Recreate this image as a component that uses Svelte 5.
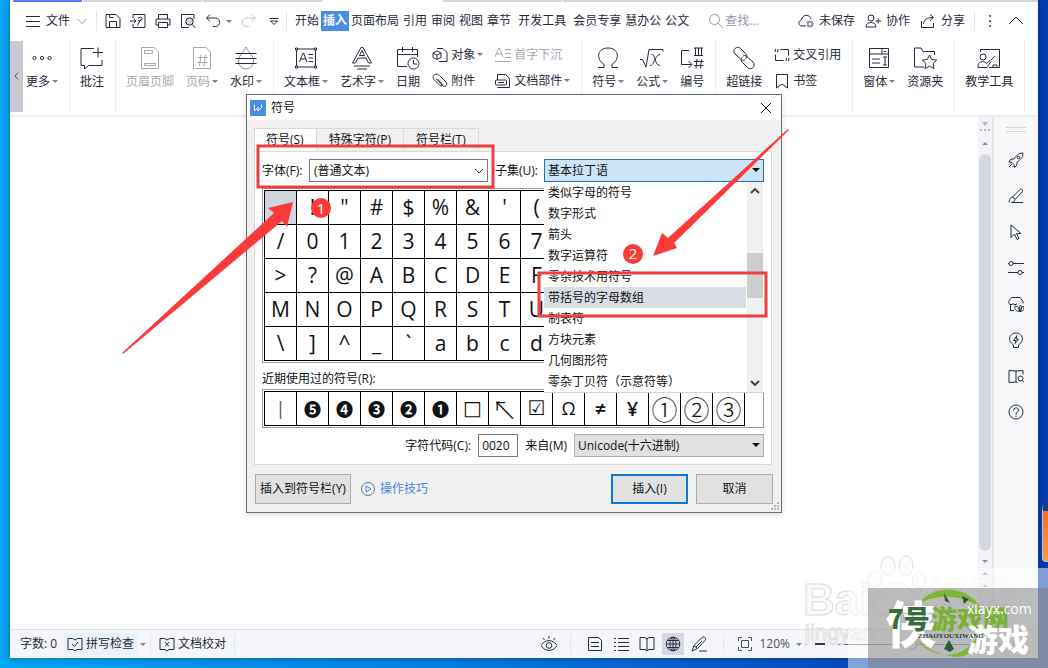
<script lang="ts">
  const icons: Record<string, string> = {
    menu: '<path d="M1 3.500h14M1 8.500h14M1 13.500h14"/>',
    chevron: '<path d="M3.500 6 8 10.500 12.500 6"/>',
    save: '<path d="M1 14.500V1.500h10l4 4v9zM4.500 14.500v-6h7v6M4.500 1.500v3h4"/>',
    export: '<path d="M3 5V1.500h12v13H3V11M0 8h6M4 6l2 2-2 2M7.500 12.500l3-6M8 5.500c1.500-2 4.500-1.500 4 .5-.4 2-3 2.500-4 1.500"/>',
    print: '<path d="M3.500 6V1.500h9V6M3.500 12H1V6h14v6h-2.500M3.500 9.500h9v5h-9z"/>',
    preview: '<path d="M14 6V1.500H1.500v13H9"/><circle cx="9.500" cy="8.500" r="3.700" fill="#d3d5da"/><path d="m12.300 11.500 3 3.500"/>',
    undo: '<path d="M5 1.500 1.500 5 5 8.500M2 5h8.500c5.500 0 5.500 8.500 0 8.500H8"/>',
    redo: '<path d="m11 1.500 3.500 3.500L11 8.500M14 5H5.500C0 5 0 13.500 5.500 13.500H8"/>',
    drop: '<path d="M3.500 5.500h9M4.500 8h7L8 11.500z"/>',
    search: '<circle cx="6.500" cy="6.500" r="5"/><path d="m10.300 10.300 4.700 4.700"/>',
    cloud: '<path d="M8 13H4C.5 13-.5 8 3.500 7c.5-6 8.500-6 9.500-1"/><circle cx="12" cy="11" r="3" fill="#98a0b5" stroke="#7d869e"/><path stroke="#fff" d="m11 10 2 2m0-2-2 2"/>',
    people: '<circle cx="6" cy="5" r="3"/><path d="M1 14c0-6 10-6 10 0zM10.500 8H16M13.200 5.500v5"/>',
    share: '<path d="M1.500 8v6.500h12V10M3.500 11C4 6.500 7 4.500 13 4.500M10 1.500l3.500 3-3.500 3"/>',
    more: '<path fill="#6b7080" stroke="none" d="M7 2h2v2H7zM7 7h2v2H7zM7 12h2v2H7z"/>',
    up: '<path d="m1 11 7-7 7 7"/>',
    object: '<path d="M5 1.500h6l4 4v9H7"/><path d="m5 4 4 2v4.500l-4 2-4-2V6zM1 6l4 2.200L9 6M5 8.200v4.300"/>',
    clip: '<path d="m4 5.500 6.500 7c2.500 2.500 6-1 3.500-3.500L7.500 2.500C4-1-1 3 2 6.500l6 6c1.500 1.200 3-.3 2-1.700L5.500 6"/>',
    dropcap: '<path d="M0 10 3.700 1h.6L8 10M1.500 7h5M10 2.500h6M10 6.500h6M10 10.500h6M0 14.500h16"/>',
    parts: '<path d="M2.500 7V1.500h8l4 4v9h-12"/><rect x=".5" y="7" width="11" height="5" rx="1"/><path d="M3 9.500h6"/>',
    cross: '<path d="M6.500 2.500h8v6M1.500 7.500v6h8M1 5l.5-3M3.500 5 4 2M12 14l.5-3M14.500 14l.5-3"/>',
    bookmark: '<path d="M2.500 1.500h11v13.500L8 11l-5.500 4z"/>',
    dots: '<circle cx="4.500" cy="12" r="1.600"/><circle cx="12" cy="12" r="1.600"/><circle cx="19.500" cy="12" r="1.600"/>',
    comment: '<path d="M14 2.500H1v17h3.500V23l4-3.500H22V14M13 6.500h10M18 1.500v10"/>',
    header: '<path d="M3.500 1.500H16L20.500 6v16.500h-17zM6.500 4.500h8v3h-8zM6.500 17.500h11v2h-11z"/>',
    page: '<path d="M3.500 1.500H16L20.500 6v16.500h-17zM8 11.500h9.500M7.500 16.500H17M11 8.500 9.500 20M15.500 8.500 14 20"/>',
    water: '<path opacity=".5" d="M12 1C9 7 4.500 10 4.500 15.500a7.500 7.500 0 0 0 15 0C19.500 10 15 7 12 1z"/><path d="M1.500 7.500h21M1.500 12.500h21M1.500 17.500h21"/>',
    textbox: '<path d="M2.500 3h19v18h-19zM5.500 16 9 7h.5l3.500 9M7 13h5M14.500 8.500h4.500M14.500 12h4.500M14.500 15.500h4.500"/><path fill="#fff" d="M1.500 2h2v2h-2zM20.500 2h2v2h-2zM1.500 20h2v2h-2zM20.500 20h2v2h-2z"/>',
    art: '<path d="M2.500 17 11 1.500h2L21.500 17h-3L16 12H8l-2.500 5zM9.500 9.500h5L12 4.500zM4 20h16M7 23h10"/>',
    date: '<path d="M11 20.500H1.500v-17h20V11M1.500 8.500h20M6.500 1v5M16.500 1v5"/><circle cx="17.500" cy="17.500" r="5.500"/><path d="M17.500 14v4H21"/>',
    omega: '<path d="M2 21.500h6v-3C-1 12 2 2 12 2s13 10 4 16.500v3h6"/>',
    formula: '<path d="M0 13.500h2.500L6 21 9 3.500h14v2M10 19.500c4 1 5-11 10-11M11.500 8.500c4-1 3 11 8.500 11"/>',
    number: '<path d="M9 4.500H1.500v14h10M8.500 15l3.500 3.500L8.500 22M14 2h9M14 9.500h9M15.500 2v7.500M18.500 2v7.500M21.500 2v7.500M14 15.500h9.500M14 19.500h9.500M17 13l-1 9.500M21.500 13l-1 9.500"/>',
    link: '<path d="M13 14c-2 1-3.500 0-5-1.500L3 8C-.5 4 5-1 8.500 2.500l5 5c2 2 1.500 4 0 5.500M11 10c2-1 3.500 0 5 1.500l5 4.500c3.500 4-2 9-5.500 5.500l-5-5c-2-2-1.500-4 0-5.500"/>',
    form: '<path d="M2.500 2.500h19v19h-19zM2.500 8h19M15 2.500V8M5 13h8M5 17h8M16 11h4M16 19h4M18 11v8M17 5l1 1 1-1"/>',
    folder: '<path d="M11 21H1.500V2H8l2 3.500h11.500V9"/><path d="m16.500 9 2.200 4.500 5 .6-3.600 3.500 1 5-4.600-2.500L12 22.600l1-5-3.700-3.500 5-.6z"/>',
    teach: '<path d="M3.500 6V3.500h19v18H12M14 14l4-4M16 21.500v-2.500h4v2.500"/><circle cx="6" cy="11" r="3"/><path d="M1 21.500c-1-7 7-7 8-4l4-3 1 1-4 6z"/>',
    rocket: '<path d="M15 1c-5 0-7 3-9 6H3L1 10l3 .5 2 2 .5 3L9 13v-3c3-2 6-4 6-9zM1 15l3-3M4.500 15l1-1M1 12.500l1-1"/><circle cx="10.500" cy="5.500" r="1.300"/>',
    brush: '<path d="M1 14.500c1-5 2-6 5-4.500 2 2 0 4.500-2.500 4.500H15M4.500 9 12 1.500c2-1.500 3.500 1 2 2.500L7 11.500"/>',
    cursor: '<path d="M3 1v12.500l3.500-3.500 2.500 5.500 2-1-2.500-5H13z"/>',
    sliders: '<path d="M0 3.500h1M5 3.500h11M0 12.500h10M14 12.500h2"/><circle cx="3" cy="3.500" r="2"/><circle cx="12" cy="12.500" r="2"/>',
    tool: '<path d="M6 14.500H2.500V9M4 1.500h8l3 4v2M1 7.500c-1-2 1-5 3-6M1 7.500c1 1.500 3 1.500 4 0 1 1.500 3 1.500 4 0M11.500 15.500C6.500 15 6.500 12 7 10c3 0 4.500 2 4.500 5.500zm0 0c-1-3 0-5 1-6.500 1.500 2 1 4 0 6.500zm1 0c4-1 3.500-3 3-5-2 0-3 2-3 5z"/>',
    bulb: '<path d="M5.500 15.500V13C-1 9 1 1 8 1s9 8 2.500 12v2.500zM9 3.500 5.500 8.500H8L7 11.500l3.500-4.500H8z"/>',
    reader: '<path d="M9.500 14.500 8 14l-7 .5v-12L8 3l7-.5v4M8 3v11"/><circle cx="12.500" cy="10.500" r="2.500"/><path d="m14.300 12.300 1.700 2"/>',
    help: '<circle cx="8" cy="8" r="7"/><path d="M5.500 6.500C5.500 3 10.500 3 10.500 6c0 2-2.500 2-2.500 4.500M8 11.500v1.500"/>',
    spell: '<path d="M1 2.500h4.500L8 4l2.500-1.500H15v11h-5L8 15l-2-1.500H1zM5 8l2.500 2.500L11 6"/>',
    proof: '<path d="M1 2.500h4.500L8 4l2.500-1.500H15v11h-5L8 15l-2-1.500H1zM6 6l4 4.500M10 6l-4 4.500"/>',
    eye: '<path d="M0 9.500c4-6.500 12-6.500 16 0-4 6.500-12 6.500-16 0zM8 0v2.500M2 2l1.500 2M14 2l-1.500 2"/><circle cx="8" cy="9.500" r="2.800"/>',
    doc: '<path d="M1.500 1.500h10l3 3v10h-13zM4 6.500h8M4 10.500h8"/>',
    list: '<path d="M5 2.500h11M5 6.500h11M5 10.500h11M5 14.500h11M1 2.500h2M1 6.500h2M1 10.500h2M1 14.500h2"/>',
    book: '<path d="M1 1.500h5L8 3l2-1.500h5v12h-5L8 15l-2-1.500H1zM8 3v12"/>',
    globe: '<circle cx="8" cy="8" r="6.800"/><ellipse cx="8" cy="8" rx="3" ry="6.800"/><path d="M1.500 8h13M2.500 4.500h11M2.500 11.500h11M8 1v14"/>',
    pen: '<path d="m1 15 2-5.500L11 1.500c2-1.500 5 1 3 3L6.500 12.500 1 15zM3 9.500l3.500 3M5 11l6-6M8 15h8"/>',
    fit: '<path d="M1.500 5V1.500H5M11 1.500h3.500V5M14.500 11v3.500H11M5 14.500H1.500V11M4.500 4.500h7v7h-7z"/>',
    play: '<circle cx="8" cy="8" r="6.500"/><path stroke="#4a86d8" d="m6 5 5 3-5 3z"/>',
    close: '<path d="m3 3 10 10M13 3 3 13"/>',
  };

  interface Tool {
    icon: string;
    label: string;
    caret?: boolean;
    muted?: boolean;
  }

  const quickTools = ["save", "export", "print", "preview"];

  const menuTabs = [
    { label: "开始" },
    { label: "插入", active: true },
    { label: "页面布局" },
    { label: "引用" },
    { label: "审阅" },
    { label: "视图" },
    { label: "章节" },
    { label: "开发工具", spaced: true },
    { label: "会员专享", spaced: true },
    { label: "慧办公" },
    { label: "公文" },
  ];

  // An inner array is a column of small buttons
  const ribbon: (Tool | Tool[])[][] = [
    [{ icon: "dots", label: "更多", caret: true }],
    [{ icon: "comment", label: "批注" }],
    [
      { icon: "header", label: "页眉页脚", muted: true },
      { icon: "page", label: "页码", caret: true, muted: true },
      { icon: "water", label: "水印", caret: true },
    ],
    [
      { icon: "textbox", label: "文本框", caret: true },
      { icon: "art", label: "艺术字", caret: true },
      { icon: "date", label: "日期" },
      [
        { icon: "object", label: "对象", caret: true },
        { icon: "clip", label: "附件" },
      ],
      [
        { icon: "dropcap", label: "首字下沉", muted: true },
        { icon: "parts", label: "文档部件", caret: true },
      ],
    ],
    [
      { icon: "omega", label: "符号", caret: true },
      { icon: "formula", label: "公式", caret: true },
      { icon: "number", label: "编号" },
    ],
    [
      { icon: "link", label: "超链接" },
      [
        { icon: "cross", label: "交叉引用" },
        { icon: "bookmark", label: "书签" },
      ],
    ],
    [
      { icon: "form", label: "窗体", caret: true },
      { icon: "folder", label: "资源夹" },
    ],
    [{ icon: "teach", label: "教学工具" }],
  ];

  const sideTools = ["rocket", "brush", "cursor", "sliders", "tool", "bulb", "reader", "help"];
  const viewModes = ["doc", "list", "book", "globe", "pen"];

  const subsets = [
    "类似字母的符号",
    "数字形式",
    "箭头",
    "数字运算符",
    "零杂技术用符号",
    "带括号的字母数组",
    "制表符",
    "方块元素",
    "几何图形符",
    "零杂丁贝符（示意符等）",
  ];

  const symbols = Array.from({ length: 75 }, (_, i) => String.fromCharCode(32 + i));

  const recent = [
    { char: "|", kind: "thin" },
    { char: "❺", kind: "round" },
    { char: "❹", kind: "round" },
    { char: "❸", kind: "round" },
    { char: "❷", kind: "round" },
    { char: "❶", kind: "round" },
    { char: "□", kind: "shape" },
    { char: "↖", kind: "ring" },
    { char: "☑", kind: "shape" },
    { char: "Ω", kind: "" },
    { char: "≠", kind: "strong" },
    { char: "¥", kind: "strong" },
    { char: "①", kind: "ring" },
    { char: "②", kind: "ring" },
    { char: "③", kind: "ring" },
  ];

  let selected = $state(0);
  let highlighted = $state(5);
  let code = $state("0020");
  let zoom = $state(43);

  function pick(index: number) {
    selected = index;
    code = symbols[index].charCodeAt(0).toString(16).toUpperCase().padStart(4, "0");
  }
</script>

{#snippet icon(name: string, big = false)}
  <svg class="icon" class:big viewBox={big ? "0 0 24 24" : "0 0 16 16"} aria-hidden="true">{@html icons[name]}</svg>
{/snippet}

<div class="desktop">
  <div class="app">
    <div class="doc-tabs"><i class="home"></i><i></i><i></i><i class="open"></i><i></i><i class="rest"></i></div>

    <header class="menubar">
      <button class="file">{@render icon("menu")}文件</button>
      <button class="file-more" aria-label="文件">{@render icon("chevron")}</button>
      <div class="quick">
        {#each quickTools as name}
          <button aria-label={name}>{@render icon(name)}</button>
        {/each}
        <button class="undo" aria-label="undo">{@render icon("undo")}<i class="caret"></i></button>
        <button class="faded" aria-label="redo">{@render icon("redo")}</button>
        <button aria-label="drop">{@render icon("drop")}</button>
      </div>
      <nav>
        {#each menuTabs as tab}
          <button class="menu-tab" class:active={tab.active} class:spaced={tab.spaced}>{tab.label}</button>
        {/each}
      </nav>
      <button class="find">{@render icon("search")}查找...</button>
      <div class="account">
        <button>{@render icon("cloud")}未保存</button>
        <button>{@render icon("people")}协作</button>
        <button>{@render icon("share")}分享</button>
        <span class="rule"></span>
        <button aria-label="more">{@render icon("more")}</button>
        <button aria-label="up">{@render icon("up")}</button>
      </div>
    </header>

    <div class="ribbon">
      <button class="back" aria-label="back"><svg viewBox="0 0 6 10"><path d="M5 1 1 5l4 4" /></svg></button>
      {#each ribbon as group}
        <div class="group">
          {#each group as item}
            {#if Array.isArray(item)}
              <div class="stack">
                {#each item as tool}
                  <button class="small" class:muted={tool.muted}>
                    {@render icon(tool.icon)}<span class:with-caret={tool.caret}>{tool.label}</span>
                  </button>
                {/each}
              </div>
            {:else}
              <button class="large" class:muted={item.muted}>
                {@render icon(item.icon, true)}<span class:with-caret={item.caret}>{item.label}</span>
              </button>
            {/if}
          {/each}
        </div>
      {/each}
    </div>

    <div class="work">
      <main class="paper"></main>
      <div class="scroller">
        <svg class="ruler" viewBox="0 0 12 12"><path d="M3 1h6L6 5zM1 8h2v2H1zM5 8h2v2H5zM9 8h2v2H9z" /></svg>
        <i class="arrow up"></i>
        <div class="thumb"></div>
        <i class="arrow down"></i>
        <i class="arrow up"></i>
        <i class="arrow up"></i>
      </div>
      <aside>
        <div class="handle"></div>
        {#each sideTools as name}
          <button aria-label={name}>{@render icon(name)}</button>
        {/each}
      </aside>
    </div>

    <footer>
      <span class="count">字数: 0</span>
      <button class="check">{@render icon("spell")}拼写检查</button>
      <i class="caret"></i>
      <span class="rule"></span>
      <button class="proof">{@render icon("proof")}文档校对</button>
      <span class="rule"></span>
      <div class="views">
        <button aria-label="eye">{@render icon("eye")}</button>
        <span class="rule"></span>
        <div class="modes">
          {#each viewModes as name}
            <button class:current={name === "globe"} aria-label={name}>{@render icon(name)}</button>
          {/each}
        </div>
        <span class="rule"></span>
        <button class="fit">{@render icon("fit")}120%<i class="caret"></i></button>
        <button class="minus" aria-label="-"></button>
        <input type="range" aria-label="120%" bind:value={zoom} />
      </div>
    </footer>
  </div>

  <div class="shortcut"></div>

  <section class="dialog" aria-labelledby="dialog-title">
    <div class="title">
      <svg class="logo" viewBox="0 0 16 16"><rect width="16" height="16" rx="1" /><path d="M4.500 4.500v6.500L8 7.500V11l3.500-3.500v-3" /></svg>
      <span id="dialog-title">符号</span>
      <button class="close" aria-label="close">{@render icon("close")}</button>
    </div>
    <div class="tabs">
      <button class="active">符号(S)</button>
      <button>特殊字符(P)</button>
      <button>符号栏(T)</button>
    </div>
    <div class="panel">
      <div class="fields">
        <label for="font">字体(F):</label>
        <div class="combo font">
          <select id="font"><option>(普通文本)</option></select>
          <svg viewBox="0 0 10 6"><path d="m1 1 4 4 4-4" /></svg>
        </div>
        <label for="subset">子集(U):</label>
        <div class="combo subset">
          <select id="subset"><option>基本拉丁语</option></select>
          <i></i>
          <div class="popup">
            <ul role="listbox" aria-label="子集">
              {#each subsets as subset, i}
                <li
                  role="option"
                  aria-selected={i === highlighted}
                  class:hover={i === highlighted}
                  onmouseenter={() => (highlighted = i)}
                >
                  {subset}
                </li>
              {/each}
            </ul>
            <div class="popup-bar">
              <svg viewBox="0 0 10 6"><path d="m1 5 4-4 4 4" /></svg>
              <div></div>
              <svg viewBox="0 0 10 6"><path d="m1 1 4 4 4-4" /></svg>
            </div>
          </div>
        </div>
      </div>
      <div class="frame">
        <div class="cells">
          {#each symbols as char, i}
            <button class:selected={i === selected} onclick={() => pick(i)} aria-label={char}>{char}</button>
          {/each}
        </div>
      </div>
      <div class="recent-label">近期使用过的符号(R):</div>
      <div class="frame">
        <div class="cells recent">
          {#each recent as item}
            <button class={item.kind}>{item.char}</button>
          {/each}
        </div>
      </div>
      <div class="code-row">
        <label for="code">字符代码(C):</label>
        <input id="code" bind:value={code} />
        <label for="source">来自(M)</label>
        <div class="combo source">
          <select id="source"><option>Unicode(十六进制)</option></select>
          <i></i>
        </div>
      </div>
    </div>
    <div class="actions">
      <button class="to-bar">插入到符号栏(Y)</button>
      <a href="#tips">{@render icon("play")}操作技巧</a>
      <button class="primary">插入(I)</button>
      <button>取消</button>
    </div>
    <svg class="grip" viewBox="0 0 8 8"><path d="M6 0h2v2H6zM3 3h2v2H3zM6 3h2v2H6zM0 6h2v2H0zM3 6h2v2H3zM6 6h2v2H6z" /></svg>
  </section>

  <svg class="marks" viewBox="0 0 1048 668">
    <rect x="258" y="146" width="235" height="41" />
    <rect x="539" y="273" width="227" height="43" />
    <path d="M293 202 287 227 282 221 123 354 122 353 274 213 268 208z" />
    <path d="M653 256 662 233 668 238 788 129 789 130 674 243 677 248z" />
    <circle cx="321" cy="208" r="10" />
    <circle cx="633" cy="254" r="10" />
    <text x="321" y="214">1</text>
    <text x="633" y="259">2</text>
  </svg>

  <svg class="brand" viewBox="0 0 248 118">
    <g class="baidu">
      <text class="name" x="3" y="65">Bai</text>
      <text class="name pale" x="72" y="65">du经验</text>
      <text class="site" x="5" y="90">jingyan</text>
      <ellipse cx="88" cy="16" rx="7" ry="10" />
      <ellipse cx="106" cy="16" rx="7" ry="10" />
      <ellipse cx="75" cy="29" rx="7" ry="8" />
      <ellipse cx="119" cy="30" rx="7" ry="8" />
      <path d="M97 32c11 0 13 11 21 17 6 6 1 17-8 16-9-2-17-2-26 0-9 1-15-9-8-16 8-6 10-17 21-17z" />
    </g>
    <path class="veil" d="M48 18h200v100H48z" />
    <path class="shade" d="M68 38h180v80H68z" />
    <path class="leaf" d="M119 54c12-20 48-20 62 4-18-13-44-15-62-4zM114 85c14 25 49 28 64 0-4 17-10 21-20 22-16-1-33-7-44-22z" />
    <path class="pine" d="m144 43 6 10-5-2zM162 46l7 3-5 5zM144 99l5-9 5 9-4 3z" />
    <text class="xia" x="86" y="93">侠</text>
    <g class="seven"><text class="dark" x="88" y="79">7号</text><text x="131" y="79">游戏网</text></g>
    <text class="play-text" x="167" y="101">游戏</text>
    <text class="domain" x="167" y="64">xiayx.com</text>
    <text class="tiny" x="118" y="88">ZHAOYOUXIWANG</text>
  </svg>
</div>

<style>
  :global(body) {
    margin: 0;
  }

  .desktop {
    position: relative;
    display: flex;
    min-height: 100vh;
    box-sizing: border-box;
    padding: 0 10px 10px;
    overflow: hidden;
    background: linear-gradient(90deg, #00a9f4, #0682de 40%, #0645b8 85%, #053cae);
    color: #262b3b;
    font: 12px/16px "Open Sans", "Noto Sans CJK SC", sans-serif;
  }

  .app {
    display: flex;
    flex: 1;
    flex-direction: column;
    background: #fff;
    box-shadow: 0 0 8px rgba(0, 30, 90, 0.5);
  }

  button,
  input,
  select {
    box-sizing: border-box;
    margin: 0;
    padding: 0;
    border: none;
    background: none;
    color: inherit;
    font: inherit;
    white-space: nowrap;
  }

  .icon {
    flex: none;
    width: 16px;
    height: 16px;
    fill: none;
    stroke: currentColor;
  }

  .icon.big {
    width: 24px;
    height: 24px;
  }

  .caret {
    flex: none;
    border: 3px solid transparent;
    border-top-color: #7b8092;
    border-bottom: none;
  }

  .rule {
    width: 1px;
    height: 20px;
    background: #e4e6ea;
  }

  .doc-tabs {
    display: flex;
    gap: 1px;
    height: 2px;
    padding-left: 3px;
  }

  .doc-tabs i {
    width: 119px;
    background: #d6d6d8;
  }

  .doc-tabs .home {
    width: 69px;
    background: #5a7df0;
  }

  .doc-tabs .open {
    background: #fff;
  }

  .doc-tabs .rest {
    flex: 1;
  }

  .menubar {
    display: flex;
    align-items: center;
    height: 38px;
    padding: 0 14px 0 15px;
  }

  .menubar button {
    display: flex;
    align-items: center;
    gap: 5px;
    height: 20px;
  }

  .menubar .file-more {
    margin-left: 4px;
    color: #a0a4b0;
  }

  .quick {
    display: flex;
    gap: 9px;
    margin-left: 6px;
    padding: 0 4px 0 8px;
    border: solid #e4e6ea;
    border-width: 0 1px;
  }

  .menubar .faded {
    color: #c2c5cc;
  }

  nav {
    display: flex;
    margin-left: 6px;
  }

  .menubar .menu-tab {
    padding: 0 2px;
  }

  .menubar .spaced {
    margin-left: 3px;
  }

  .menubar .active {
    background: #4a8ceb;
    color: #fff;
    font-weight: 700;
  }

  .menubar .find {
    gap: 1px;
    margin-left: 17px;
    color: #9298ab;
  }

  .account {
    display: flex;
    gap: 10px;
    margin-left: auto;
  }

  .account .rule {
    margin: 0 -3px 0 -1px;
  }

  .ribbon {
    display: flex;
    height: 77px;
    box-sizing: border-box;
    padding-bottom: 3px;
    border-bottom: 2px solid #eceef1;
  }

  .back {
    width: 13px;
    margin: 1px -7px 0 0;
    background: #c9cad0;
  }

  .back svg {
    width: 5px;
    height: 10px;
    fill: none;
    stroke: #333;
  }

  .group {
    display: flex;
    flex: none;
    gap: 12px;
    padding: 6px 11px 0 10px;
    border-right: 1px solid #eef0f3;
  }

  .large {
    display: flex;
    flex-direction: column;
    align-items: center;
    gap: 4px;
    height: 44px;
  }

  .large span {
    height: 16px;
  }

  .stack {
    display: flex;
    flex-direction: column;
    gap: 8px;
  }

  .small {
    display: flex;
    align-items: center;
    gap: 3px;
    height: 18px;
  }

  .with-caret::after {
    content: "";
    display: inline-block;
    margin-left: 2px;
    border: 3px solid transparent;
    border-top-color: #7b8092;
    border-bottom: none;
    vertical-align: 3px;
  }

  .muted {
    color: #a6a9b1;
  }

  .work {
    display: flex;
    flex: 1;
  }

  .paper {
    flex: 1;
  }

  .scroller {
    display: flex;
    flex-direction: column;
    align-items: center;
    gap: 9px;
    width: 14px;
    padding-bottom: 42px;
    border-right: 2px solid #e3e5e9;
    background: #f2f3f6;
  }

  .ruler {
    width: 12px;
    height: 12px;
    margin-top: 4px;
    fill: #b2b5c4;
  }

  .scroller .arrow {
    border: 3px solid transparent;
  }

  .scroller .up {
    border-top: none;
    border-bottom-color: #8b8fa3;
  }

  .scroller .down {
    border-bottom: none;
    border-top-color: #8b8fa3;
  }

  .thumb {
    flex: 1;
    width: 12px;
    border-radius: 6px;
    background: #d5d7e1;
  }

  aside {
    display: flex;
    flex-direction: column;
    align-items: center;
    gap: 20px;
    width: 44px;
    background: #f6f8fa;
  }

  aside button {
    height: 16px;
    line-height: 0;
  }

  .handle {
    width: 20px;
    height: 3px;
    margin-top: 10px;
    border: solid #d3d6dc;
    border-width: 1px 0;
  }

  footer {
    display: flex;
    align-items: center;
    height: 28px;
    padding-left: 10px;
    border-top: 1px solid #dcdfe5;
    background: #f5f6f9;
  }

  footer button {
    display: flex;
    align-items: center;
    gap: 3px;
    height: 22px;
  }

  .count {
    width: 44px;
  }

  .check {
    margin-right: 3px;
    padding: 0 3px;
    background: #eaf0f9;
  }

  footer > .rule {
    margin: 0 4px;
  }

  .proof {
    padding: 0 4px;
  }

  .views {
    display: flex;
    align-items: center;
    gap: 13px;
    margin-left: auto;
    padding-right: 30px;
  }

  .modes {
    display: flex;
    gap: 4px;
  }

  .modes button {
    padding: 0 3px;
  }

  .modes .current {
    background: #d6d9e5;
  }

  .fit {
    color: #4a5068;
  }

  .views .fit {
    gap: 6px;
  }

  .views .minus {
    width: 10px;
    height: 2px;
    background: #343a50;
  }

  .views input {
    width: 170px;
    height: 12px;
    appearance: none;
    background: linear-gradient(#5c6172, #5c6172) center / 100% 1px no-repeat;
  }

  .views input::-webkit-slider-thumb {
    width: 11px;
    height: 11px;
    border: 1px solid #70758a;
    border-radius: 50%;
    background: #f5f6f9;
    appearance: none;
  }

  .shortcut {
    position: absolute;
    top: 503px;
    right: -20px;
    width: 24px;
    height: 50px;
    border: 1px solid #b9c3dc;
    border-top-width: 8px;
    border-top-color: #1a3b80;
    border-radius: 4px;
    background: linear-gradient(#f27022, #f79a4d);
  }

  .dialog {
    position: absolute;
    top: 94px;
    left: 246px;
    width: 536px;
    box-sizing: border-box;
    border: 1px solid #6c6c6e;
    background: #f0f0f0;
    box-shadow: 0 2px 6px rgba(0, 0, 0, 0.12);
    color: #111;
  }

  .title {
    display: flex;
    align-items: center;
    gap: 5px;
    height: 25px;
    padding: 0 7px 0 3px;
    background: #fff;
  }

  .logo {
    width: 16px;
    height: 16px;
    fill: #4a8ceb;
  }

  .logo path {
    fill: none;
    stroke: #fff;
  }

  .close {
    height: 16px;
    margin-left: auto;
    line-height: 0;
  }

  .tabs {
    display: flex;
    padding: 8px 0 0 7px;
  }

  .tabs button {
    height: 23px;
    padding: 0 12px;
    border: 1px solid #dadada;
    border-width: 1px 1px 0 0;
  }

  .tabs .active {
    padding: 0 12px 0 11px;
    border-left-width: 1px;
    background: #fff;
  }

  .panel {
    margin: 0 9px 0 7px;
    padding: 7px;
    border: 1px solid #dadada;
    background: #fff;
  }

  .fields {
    display: flex;
    align-items: center;
    margin-bottom: 6px;
  }

  .fields label {
    width: 47px;
  }

  .combo {
    position: relative;
    height: 23px;
  }

  .combo select {
    width: 100%;
    height: 100%;
    padding-left: 4px;
    border: 1px solid #7a7a7a;
    appearance: none;
  }

  .combo > svg,
  .combo > i {
    position: absolute;
    top: 9px;
    right: 4px;
    width: 10px;
    pointer-events: none;
  }

  .combo > i {
    width: auto;
    border: 4px solid transparent;
    border-top-color: #111;
    border-bottom: none;
  }

  .combo svg,
  .popup-bar svg {
    fill: none;
    stroke: #444;
  }

  .font {
    width: 179px;
    margin-right: 7px;
  }

  .subset {
    width: 220px;
    margin-left: auto;
  }

  .subset select {
    padding-left: 3px;
    border-color: #2f6fa8;
    background: #cce4f7;
  }

  .source {
    width: 190px;
  }

  .source select {
    padding-left: 3px;
    border-color: #adadad;
    background: #e1e1e1;
  }

  .popup {
    position: absolute;
    z-index: 1;
    top: 23px;
    left: 0;
    display: flex;
    width: 100%;
    background: #fff;
    box-shadow: 0 1px #d5d5d5;
  }

  ul {
    flex: 1;
    margin: 0;
    padding: 0;
    list-style: none;
  }

  li {
    padding-left: 4px;
    line-height: 21px;
  }

  .hover {
    background: #d9dde5;
  }

  .popup-bar {
    display: flex;
    flex-direction: column;
    align-items: center;
    width: 16px;
    margin: 0 1px;
    padding: 6px 0;
    box-sizing: border-box;
    background: #f0f0f0;
  }

  .popup-bar svg {
    width: 10px;
    height: 6px;
    stroke-width: 2;
  }

  .popup-bar div {
    width: 100%;
    height: 45px;
    margin: 59px 0 auto;
    background: #cdcdcd;
  }

  .frame {
    padding: 1px;
    border: 1px solid #9a9a9a;
  }

  .cells {
    display: grid;
    grid-template-columns: repeat(15, 32px);
    width: max-content;
    border: solid #000;
    border-width: 1px 0 0 1px;
  }

  .cells button {
    height: 34px;
    border: solid #000;
    border-width: 0 1px 1px 0;
    font-size: 21px;
    line-height: 31px;
  }

  .cells .selected {
    background: #cfd6de;
  }

  .recent button {
    font-size: 18px;
  }

  .recent .thin {
    color: #555;
  }

  .recent .strong {
    font-size: 20px;
    font-weight: 600;
  }

  .recent .round {
    font-size: 17px;
    font-weight: 700;
    font-family: "Noto Sans CJK SC", sans-serif;
  }

  .recent .shape {
    font-size: 20px;
    font-family: "DejaVu Sans", sans-serif;
  }

  .recent .ring {
    font-size: 26px;
    font-family: "Noto Sans CJK SC", sans-serif;
    font-weight: 300;
  }

  .recent-label {
    height: 26px;
    line-height: 31px;
  }

  .code-row {
    display: flex;
    align-items: center;
    justify-content: flex-end;
    gap: 7px;
    margin-top: 6px;
  }

  .code-row input {
    width: 40px;
    height: 23px;
    padding: 0 3px;
    border: 1px solid #7a7a7a;
  }

  .actions {
    display: flex;
    align-items: center;
    gap: 8px;
    padding: 9px 8px 8px;
  }

  .actions button {
    width: 77px;
    height: 30px;
    border: 1px solid #adadad;
    background: #e1e1e1;
  }

  .actions .to-bar {
    width: 96px;
  }

  .actions .primary {
    border: 2px solid #0f78d4;
  }

  .actions a {
    display: flex;
    gap: 4px;
    margin: 0 auto 0 1px;
    color: #4a86e0;
    text-decoration: none;
  }

  .actions a .icon {
    color: #6a7486;
  }

  .grip {
    position: absolute;
    right: 2px;
    bottom: 2px;
    width: 8px;
    fill: #b5b5b5;
  }

  .marks {
    position: absolute;
    z-index: 2;
    top: 0;
    left: 0;
    width: 1048px;
    fill: #fb3a39;
    pointer-events: none;
  }

  .marks rect {
    fill: none;
    stroke: #ee3e3e;
    stroke-width: 3;
  }

  .marks text {
    fill: #fff;
    font-size: 15px;
    text-anchor: middle;
  }

  .brand {
    position: absolute;
    right: 0;
    bottom: 0;
    width: 248px;
    pointer-events: none;
  }

  .baidu {
    fill: #fafafa;
    stroke: #dcdce0;
  }

  .name {
    font: 700 44px "Liberation Sans", "Noto Sans CJK SC", sans-serif;
  }

  .pale {
    opacity: 0.4;
  }

  .site {
    font: 22px "Liberation Sans", sans-serif;
  }

  .veil {
    fill: rgba(255, 255, 255, 0.5);
  }

  .shade {
    fill: rgba(122, 122, 122, 0.5);
  }

  .leaf {
    fill: #7fb636;
  }

  .pine {
    fill: #2c5a38;
  }

  .seven {
    fill: #7cb034;
    font: 900 26px "Noto Sans CJK SC", sans-serif;
  }

  .seven .dark {
    fill: #3a6a40;
  }

  .xia,
  .play-text,
  .domain {
    fill: #fff;
  }

  .xia {
    font: 900 50px "Noto Sans CJK SC", sans-serif;
  }

  .play-text {
    font: 900 31px "Noto Sans CJK SC", sans-serif;
  }

  .domain {
    font-size: 14px;
  }

  .tiny {
    fill: #2b3a2c;
    font: 700 7px "Liberation Serif", serif;
  }
</style>
